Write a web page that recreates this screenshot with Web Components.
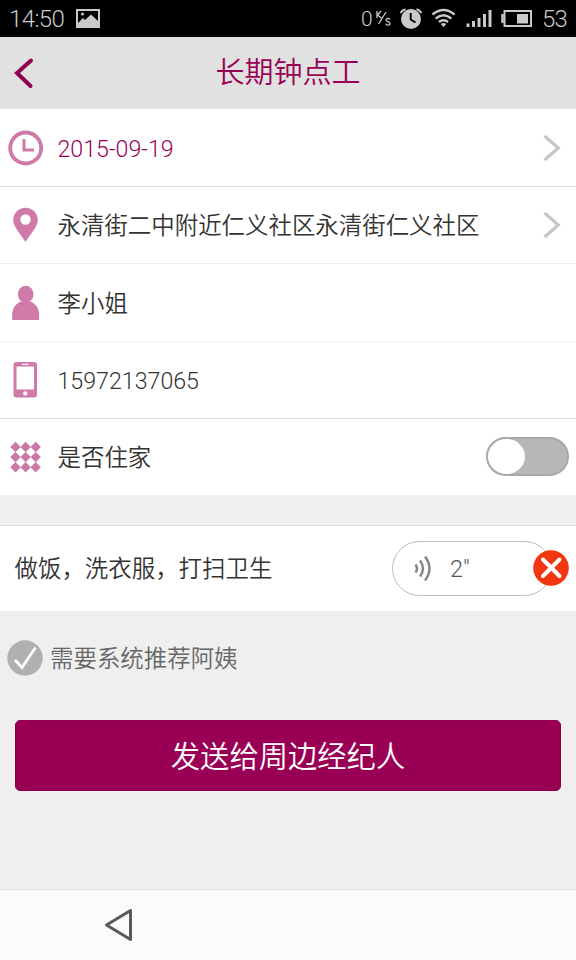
<!DOCTYPE html>
<html lang="zh-CN">
<head>
<meta charset="utf-8">
<title>长期钟点工</title>
<style>
html,body{margin:0;padding:0}
body{width:576px;height:960px;overflow:hidden;background:#efefef;font-family:Roboto,"Noto Sans CJK SC",sans-serif;font-weight:350;color:#333}
</style>
</head>
<body>
<hourly-page></hourly-page>
<script>
const define = (name, css, html) => customElements.define(name, class extends HTMLElement {
  constructor() {
    super();
    this.attachShadow({mode: 'open'}).innerHTML =
      `<style>*{box-sizing:border-box}svg{display:block;flex:none}${css}</style>${html}`;
  }
});

define('status-bar', `
:host{display:flex;align-items:center;height:37px;background:#000;color:#cacaca;padding:0 8px 0 9px;font-size:24px;font-weight:300;line-height:37px;box-sizing:border-box}
.time,.pct,.rate{padding-top:1px;white-space:nowrap}
.time{width:67px;letter-spacing:-.6px}
.rate{margin-left:auto;font-size:21px;width:14px}
.pct{width:26px;letter-spacing:-.8px}
`, `
<span class="time">14:50</span>
<svg width="24" height="19" viewBox="0 0 24 19"><path fill="#cacaca" fill-rule="evenodd" d="M0 0H24V19H0ZM2 2V14L7 9L9 11L15 5.5L22 12V2ZM6.5 3.5a1.5 1.5 0 1 1 0 3a1.5 1.5 0 1 1 0-3Z"/></svg>
<span class="rate">0</span>
<svg width="167" height="37" viewBox="375 0 167 37" fill="none" stroke="#cacaca">
  <path stroke-width="1.3" d="M377 11V18M381 11L377.5 15L381.3 18M386 12L378.5 24M390 19.5C389 18 386 18 386 20C386 22 390 21.3 390 23.5C390 25.8 386.3 25.5 385.8 23.8"/>
  <circle cx="411" cy="19" r="10" fill="#cacaca" stroke="none"/><path stroke="#000" stroke-width="2" d="M410.7 13V19.5L415.5 22.5"/><path stroke-width="2" d="M400.5 13Q402 10 405.5 9.2M416.5 9.2Q420 10 421.5 13"/>
  <path stroke-width="2.5" d="M432.5 14.5Q443.500 5.500 454.500 14.500M435.700 18.500Q443.500 12 451.300 18.500M439 22Q443.500 18.500 448 22"/><path fill="#cacaca" stroke="none" d="M440.700 24Q443.500 22 446.300 24L443.500 27Z"/>
  <path stroke-width="3" d="M468 23.500V27M473.500 21V27M479 18V27M484.500 14V27M490 10V27"/>
  <path stroke-width="2" d="M504.500 11H531V26H504.500Z"/><path stroke-width="2.500" d="M502.500 14V23"/><path fill="#cacaca" stroke="none" d="M517 14H528V23.500H517Z"/>
</svg>
<span class="pct">53</span>`);

define('title-bar', `
:host{display:grid;grid-template-columns:48px 1fr 48px;align-items:center;height:72px;background:#e1e1e1;color:#990055;box-sizing:border-box;border-bottom:1px solid #e8e8e8}
h1{margin:0;text-align:center;font-size:29px;font-weight:inherit;line-height:40px}
`, `
<svg width="48" height="36" viewBox="0 55 48 36" fill="none" stroke="#900050" stroke-width="4" stroke-linecap="round"><path d="M31 60.500L17 73L30.500 86"/></svg>
<h1><slot></slot></h1>`);

define('ui-icon', `:host{display:block;width:36px;height:36px;flex:none}`, '');
const icons = {
  clock: '<circle cx="17.700" cy="18" r="15.500" fill="none" stroke="#cf7aa8" stroke-width="3.800"/><path d="M16 9V20H26" fill="none" stroke="#cf7aa8" stroke-width="3"/>',
  pin: '<path fill="#cf7aa8" fill-rule="evenodd" d="M17.500 .700A12.300 12.300 0 0 1 29.800 13C29.800 20 22 27.500 17.500 35C13 27.500 5.200 20 5.200 13A12.300 12.300 0 0 1 17.500 .700ZM17.500 7.300a5.200 5.200 0 1 0 0 10.400a5.200 5.200 0 1 0 0-10.400Z"/>',
  person: '<g fill="#cf7aa8"><ellipse cx="17.700" cy="9.300" rx="7.800" ry="8.500"/><path d="M4.200 35V29.500C4.200 23 8 18.500 13 16.500H22.400C27.400 18.500 31.100 23 31.100 29.500V35Z"/></g>',
  phone: '<path fill="#cf7aa8" fill-rule="evenodd" d="M8.500 0H26Q29 0 29 3V32.500Q29 35.500 26 35.500H8.500Q5.500 35.500 5.500 32.500V3Q5.500 0 8.500 0ZM8.500 4.500V27.500H26V4.500ZM14 1.800V3H20.500V1.800ZM17.300 29.200a2.200 2.200 0 1 0 0 4.400a2.200 2.200 0 1 0 0-4.400Z"/>',
  grid: '<g fill="#cb78a6">' + [8,18.1,28.2].map(y => [7.500,17.600,27.700].map(x => `<path d="M${x} ${y-5.200}L${x+5.200} ${y}L${x} ${y+5.200}L${x-5.200} ${y}Z"/>`).join('')).join('') + '</g>',
  check: '<circle cx="17" cy="18" r="17.700" fill="#b0b0b0"/><path d="M7 20L14 27.500L27.500 7.500" fill="none" stroke="#fff" stroke-width="2.800"/>',
  close: '<circle cx="18" cy="18" r="17.800" fill="#f0370f"/><path d="M10 9.500L26.500 26M26.500 9.500L10 26" stroke="#fff" stroke-width="4" stroke-linecap="round"/>'
};
const paintIcons = root => root.querySelectorAll('ui-icon').forEach(el => {
  el.shadowRoot.innerHTML += `<svg width="36" height="36" viewBox="0 0 36 36" overflow="visible">${icons[el.getAttribute('name')]}</svg>`;
});

define('form-row', `
:host{display:flex;align-items:center;gap:14px;background:#fff;padding:0 7px 0 8px;font-size:23.450px;line-height:34px;white-space:nowrap;border-bottom:1px solid var(--line,#dcdcdc);box-sizing:border-box}
.label{flex:1;padding-top:2px;margin-left:-.5px}
`, `<slot name="icon"></slot><span class="label"><slot></slot></span><slot name="end"></slot>`);

define('row-arrow', `:host{display:block;margin-right:7px}`,
`<svg width="20" height="28" viewBox="0 0 20 28" fill="none" stroke="#c6c6c6" stroke-width="3.200"><path d="M2.500 2L16.300 14L2.500 26"/></svg>`);

define('toggle-switch', `
:host{display:flex;width:83px;height:39px;border:2px solid #a8a8a8;border-radius:20px;background:#b7b7b7;box-sizing:border-box}
i{width:37px;height:35px;border-radius:50%;background:#fff}
`, `<i></i>`);

define('voice-clip', `
:host{display:flex;align-items:center;position:relative;width:160px;height:55px;border:1px solid #bdbdbd;border-radius:28px;color:#555;font-size:23.500px;box-sizing:border-box;padding-left:21px;gap:17px}
.length{padding-top:2px}
.close{position:absolute;right:-18px;top:8px}
`, `
<svg width="19" height="27" viewBox="0 0 19 27" fill="none" stroke="#858585" stroke-width="2.400"><path d="M1.500 9.500Q4.500 13.500 1.500 17.500M6 5.500Q12 13.500 6 21.500M11 1.500Q20 13.500 11 25.500"/></svg>
<span class="length"><slot></slot></span><div class="close"><slot name="close"></slot></div>`);

define('option-line', `
:host{display:flex;align-items:center;gap:6px;height:94px;padding:0 8px;font-size:23.450px;line-height:34px;color:#666;box-sizing:border-box}
span{padding-top:2px}
`, `<slot name="icon"></slot><span><slot></slot></span>`);

define('primary-button', `
:host{display:block;margin:15px 15px 0}
button{display:block;width:100%;height:71px;border:1px solid #8c004b;border-radius:5px;background:#990055;color:#fff;font:350 29.300px Roboto,"Noto Sans CJK SC",sans-serif;padding:0 0 4px}
`, `<button><slot></slot></button>`);

define('nav-bar', `
:host{display:flex;align-items:center;height:71px;background:#fbfbfb;border-top:1px solid #e4e4e4;padding-left:104px;box-sizing:border-box}
`, `<svg width="30" height="34" viewBox="0 0 30 34" fill="none" stroke="#5a5a5a" stroke-width="3" stroke-linejoin="round"><path d="M2.500 17L26.500 2.500V31.500Z"/></svg>`);

define('hourly-page', `
:host{display:flex;flex-direction:column;width:576px;height:960px;background:#efefef}
.r{height:77px}
.r1,.r3{height:78px}
.r1{color:#990055}
.r1,.r4{font-size:23.200px}
.r2{--line:#ececec}.r3{--line:#f3f3f3}
.r5{height:76px;--line:#fff}
.note{height:86px;margin-top:30px;border-top:1px solid #dcdcdc;--line:#fff;padding-left:15px;padding-right:24px}
nav-bar{margin-top:auto}
`, `
<status-bar></status-bar>
<title-bar>长期钟点工</title-bar>
<form-row class="r r1"><ui-icon slot="icon" name="clock"></ui-icon>2015-09-19<row-arrow slot="end"></row-arrow></form-row>
<form-row class="r r2"><ui-icon slot="icon" name="pin"></ui-icon>永清街二中附近仁义社区永清街仁义社区<row-arrow slot="end"></row-arrow></form-row>
<form-row class="r r3"><ui-icon slot="icon" name="person"></ui-icon>李小姐</form-row>
<form-row class="r r4"><ui-icon slot="icon" name="phone"></ui-icon>15972137065</form-row>
<form-row class="r r5"><ui-icon slot="icon" name="grid"></ui-icon>是否住家<toggle-switch slot="end"></toggle-switch></form-row>
<form-row class="note">做饭，洗衣服，打扫卫生<voice-clip slot="end">2"<ui-icon slot="close" name="close"></ui-icon></voice-clip></form-row>
<option-line><ui-icon slot="icon" name="check"></ui-icon>需要系统推荐阿姨</option-line>
<primary-button>发送给周边经纪人</primary-button>
<nav-bar></nav-bar>`);
paintIcons(document.querySelector('hourly-page').shadowRoot);
</script>
</body>
</html>
